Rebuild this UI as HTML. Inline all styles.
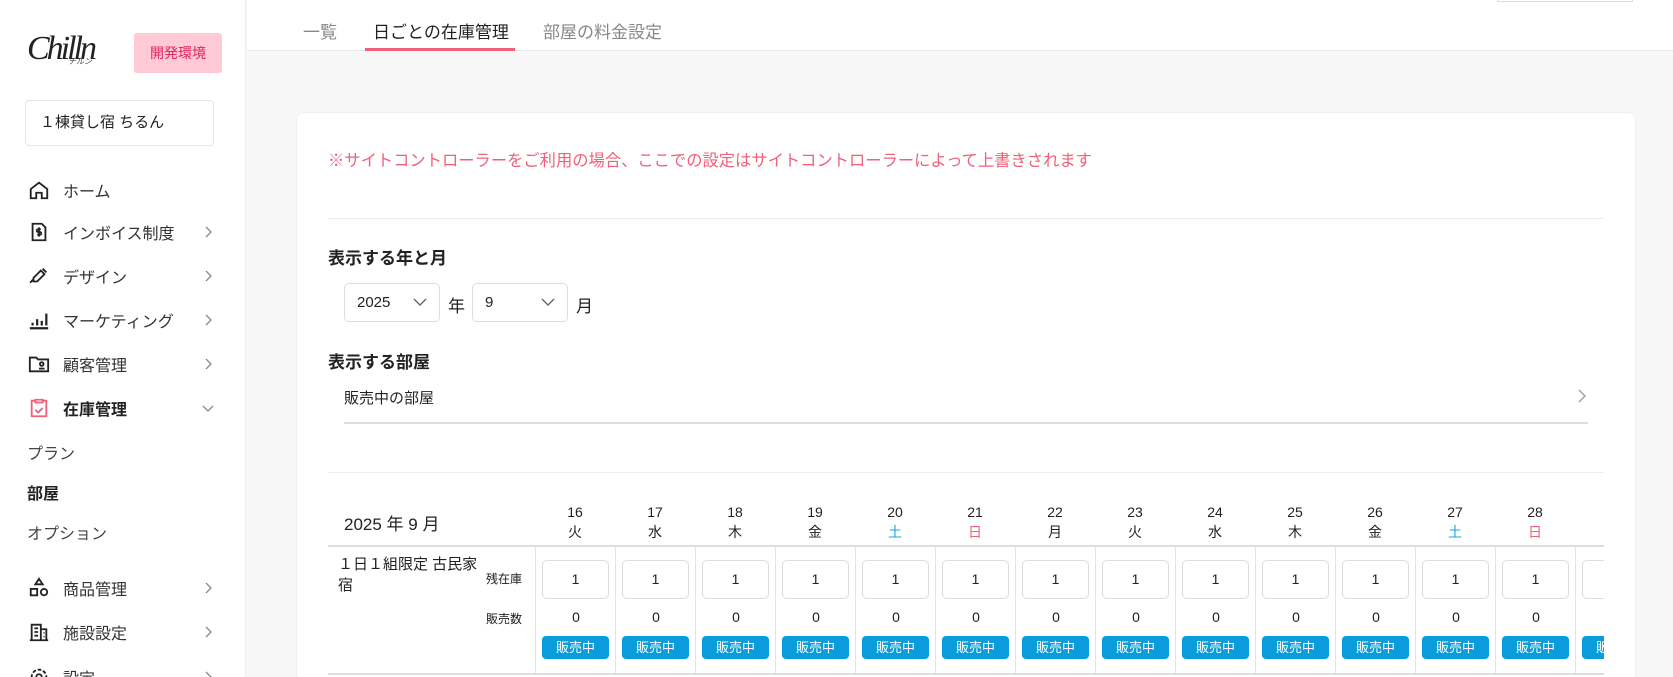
<!DOCTYPE html>
<html><head><meta charset="utf-8">
<style>
*{box-sizing:border-box;margin:0;padding:0}
html,body{width:1673px;height:677px;overflow:hidden}
body{background:#f7f7f7;font-family:"Liberation Sans","Noto Sans CJK JP",sans-serif;color:#222;position:relative}
.abs{position:absolute}
#side{left:0;top:0;width:246px;height:677px;background:#fff;border-right:1px solid #ececec;overflow:hidden}
.nav{position:absolute;left:0;width:246px;height:30px;display:flex;align-items:center;font-size:16px;color:#333}
.nav svg.ic{position:absolute;left:28px;width:22px;height:22px}
.nav .t{position:absolute;left:63px}
.nav .ch{position:absolute;left:202px;width:12px;height:12px}
.sub{position:absolute;left:27px;font-size:16px;color:#444}
#hdr{left:247px;top:0;width:1426px;height:51px;background:#fff;border-bottom:1px solid #eaeaea}
.tab{position:absolute;top:18px;font-size:17px;color:#888}
#card{left:296px;top:112px;width:1340px;height:565px;background:#fff;border-radius:8px 8px 0 0;border:1px solid #f0f0f0;border-bottom:none}
.hr{position:absolute;height:1px;background:#ececec}
.sel{position:absolute;top:283px;height:39px;border:1px solid #ddd;border-radius:5px;font-size:15px;padding:10px 12px;background:#fff}
.sel svg{position:absolute;right:12px;top:14px}
.dn{position:absolute;top:502px;width:80px;text-align:center;font-size:14px;line-height:20px}
.cell{position:absolute;width:80px;top:545px;height:132px;border-left:1px solid #e3e3e3}
.inp{position:absolute;left:6px;top:15px;width:67px;height:39px;border:1px solid #ddd;border-radius:5px;text-align:center;line-height:37px;font-size:14px;background:#fff}
.zero{position:absolute;left:0;width:80px;top:64px;text-align:center;font-size:14px}
.btn{position:absolute;left:6px;top:91px;width:67px;height:23px;background:#0a9ddc;border-radius:4px;color:#fff;font-size:13px;text-align:center;line-height:23px}
</style></head><body>
<div id="side" class="abs">
  <div class="abs" style="left:27px;top:30px;font-family:'Liberation Serif',serif;font-style:italic;font-size:34px;letter-spacing:-3px;color:#222">Chilln</div>
  <div class="abs" style="left:68px;top:56px;font-size:8px;color:#444;font-style:italic">チルン</div>
  <div class="abs" style="left:134px;top:33px;width:88px;height:40px;background:#ffc9d6;border-radius:3px;color:#e0245e;font-size:14px;text-align:center;line-height:40px">開発環境</div>
  <div class="abs" style="left:25px;top:100px;width:189px;height:46px;border:1px solid #e6e6e6;border-radius:4px;font-size:15px;padding-left:14px;line-height:44px">１棟貸し宿 ちるん</div>

  <div class="nav" style="top:175px"><svg class="ic" viewBox="0 0 24 24" fill="none" stroke="#222" stroke-width="2"><path d="M3 11l9-7 9 7v10h-6v-6h-6v6H3z"/></svg><span class="t">ホーム</span></div>
  <div class="nav" style="top:217px"><svg class="ic" viewBox="0 0 24 24" fill="none" stroke="#222" stroke-width="2"><path d="M5 3h10l4 4v14H5z"/><path d="M14 9h-3a1.5 1.5 0 0 0 0 3h2a1.5 1.5 0 0 1 0 3h-3M12 7v10"/></svg><span class="t">インボイス制度</span><svg class="ch" viewBox="0 0 12 12" fill="none" stroke="#888" stroke-width="1.3"><path d="M4 1l5 5-5 5"/></svg></div>
  <div class="nav" style="top:261px"><svg class="ic" viewBox="0 0 24 24" fill="none" stroke="#222" stroke-width="2"><path d="M14 6l4 4-8 8H6v-4zM16 4l4 4M2 19c2 0 2-3 4-3"/></svg><span class="t">デザイン</span><svg class="ch" viewBox="0 0 12 12" fill="none" stroke="#888" stroke-width="1.3"><path d="M4 1l5 5-5 5"/></svg></div>
  <div class="nav" style="top:305px"><svg class="ic" viewBox="0 0 24 24" fill="none" stroke="#222" stroke-width="2.4"><path d="M2 21h20M5 18v-3M10 18v-7M15 18v-5M20 18V5"/></svg><span class="t">マーケティング</span><svg class="ch" viewBox="0 0 12 12" fill="none" stroke="#888" stroke-width="1.3"><path d="M4 1l5 5-5 5"/></svg></div>
  <div class="nav" style="top:349px"><svg class="ic" viewBox="0 0 24 24" fill="none" stroke="#222" stroke-width="2"><path d="M2 5h7l2 2h11v13H2z"/><circle cx="15" cy="12" r="2"/><path d="M12 17h6"/></svg><span class="t">顧客管理</span><svg class="ch" viewBox="0 0 12 12" fill="none" stroke="#888" stroke-width="1.3"><path d="M4 1l5 5-5 5"/></svg></div>
  <div class="nav" style="top:393px"><svg class="ic" viewBox="0 0 24 24" fill="none" stroke="#f0607a" stroke-width="2"><path d="M8 4H4v17h16V4h-4M8 3h8v3H8zM8 14l3 3 5-5"/></svg><span class="t" style="font-weight:bold;color:#222">在庫管理</span><svg class="ch" viewBox="0 0 12 12" fill="none" stroke="#888" stroke-width="1.3"><path d="M1 4l5 5 5-5"/></svg></div>
  <div class="sub" style="top:440px">プラン</div>
  <div class="sub" style="top:480px;font-weight:bold;color:#222">部屋</div>
  <div class="sub" style="top:520px">オプション</div>
  <div class="nav" style="top:573px"><svg class="ic" viewBox="0 0 24 24" fill="none" stroke="#222" stroke-width="2"><path d="M12 2l4 6H8z"/><rect x="3" y="13" width="7" height="7"/><circle cx="17.5" cy="16.5" r="3.5"/></svg><span class="t">商品管理</span><svg class="ch" viewBox="0 0 12 12" fill="none" stroke="#888" stroke-width="1.3"><path d="M4 1l5 5-5 5"/></svg></div>
  <div class="nav" style="top:617px"><svg class="ic" viewBox="0 0 24 24" fill="none" stroke="#222" stroke-width="2"><path d="M2 21h20M4 21V4h10v17M14 9h6v12M7 8h4M7 12h4M7 16h4M17 13h1M17 17h1"/></svg><span class="t">施設設定</span><svg class="ch" viewBox="0 0 12 12" fill="none" stroke="#888" stroke-width="1.3"><path d="M4 1l5 5-5 5"/></svg></div>
  <div class="nav" style="top:662px"><svg class="ic" viewBox="0 0 24 24" fill="none" stroke="#222" stroke-width="2"><circle cx="12" cy="12" r="3"/><circle cx="12" cy="12" r="8" stroke-dasharray="4 2"/></svg><span class="t">設定</span><svg class="ch" viewBox="0 0 12 12" fill="none" stroke="#888" stroke-width="1.3"><path d="M4 1l5 5-5 5"/></svg></div>
</div>

<div id="hdr" class="abs">
  <div class="tab" style="left:56px">一覧</div>
  <div class="tab" style="left:126px;color:#222">日ごとの在庫管理</div>
  <div class="abs" style="left:118px;top:48px;width:150px;height:3px;background:#f0607a"></div>
  <div class="tab" style="left:296px">部屋の料金設定</div>
  <div class="abs" style="left:1250px;top:0;width:136px;height:2px;border:1px solid #ddd;border-top:none"></div>
</div>

<div id="card" class="abs"></div>
<div class="abs" style="left:328px;top:147px;font-size:16.3px;color:#f0607a">※サイトコントローラーをご利用の場合、ここでの設定はサイトコントローラーによって上書きされます</div>
<div class="hr" style="left:328px;top:218px;width:1276px"></div>
<div class="abs" style="left:328px;top:244px;font-size:17px;font-weight:bold">表示する年と月</div>
<div class="sel" style="left:344px;width:96px">2025<svg width="14" height="9" viewBox="0 0 14 9" fill="none" stroke="#666" stroke-width="1.4"><path d="M1 1l6 6 6-6"/></svg></div>
<div class="abs" style="left:448px;top:292px;font-size:17px">年</div>
<div class="sel" style="left:472px;width:96px">9<svg width="14" height="9" viewBox="0 0 14 9" fill="none" stroke="#666" stroke-width="1.4"><path d="M1 1l6 6 6-6"/></svg></div>
<div class="abs" style="left:576px;top:292px;font-size:17px">月</div>
<div class="abs" style="left:328px;top:348px;font-size:17px;font-weight:bold">表示する部屋</div>
<div class="abs" style="left:344px;top:387px;font-size:15px">販売中の部屋</div>
<svg class="abs" style="left:1577px;top:389px" width="10" height="14" viewBox="0 0 10 14" fill="none" stroke="#999" stroke-width="1.3"><path d="M2 1l6 6-6 6"/></svg>
<div class="hr" style="left:344px;top:422px;width:1244px;background:#ddd;height:2px"></div>
<div class="hr" style="left:328px;top:472px;width:1276px"></div>

<div class="abs" style="left:328px;top:0;width:1276px;height:677px;overflow:hidden">
  <div class="abs" style="left:16px;top:510px;font-size:17px">2025 年 9 月</div>
  <div class="hr" style="left:0;top:545px;width:1276px;background:#ddd;height:2px"></div>
  <div class="hr" style="left:0;top:673px;width:1276px;background:#ddd;height:2px"></div>
  <div class="abs" style="left:10px;top:554px;width:140px;font-size:15px;line-height:21px">１日１組限定 古民家<br>宿</div>
  <div class="abs" style="left:158px;top:570px;font-size:12px">残在庫</div>
  <div class="abs" style="left:158px;top:610px;font-size:12px">販売数</div>
  <div id="cols"></div>
</div>
<script>
var days=[["16","火"],["17","水"],["18","木"],["19","金"],["20","土"],["21","日"],["22","月"],["23","火"],["24","水"],["25","木"],["26","金"],["27","土"],["28","日"],["29","月"]];
var h="";
days.forEach(function(d,i){var x=207+i*80;var c=d[1]=="土"?"#1aa7e0":(d[1]=="日"?"#f0607a":"#222");
h+='<div class="dn" style="left:'+x+'px">'+(i<13?d[0]+'<br><span style="color:'+c+'">'+d[1]+'</span>':'')+'</div>';
h+='<div class="cell" style="left:'+x+'px;height:128px"><div class="inp">1</div><div class="zero">0</div><div class="btn">販売中</div></div>';});
document.getElementById("cols").innerHTML=h;
</script>
</body></html>
